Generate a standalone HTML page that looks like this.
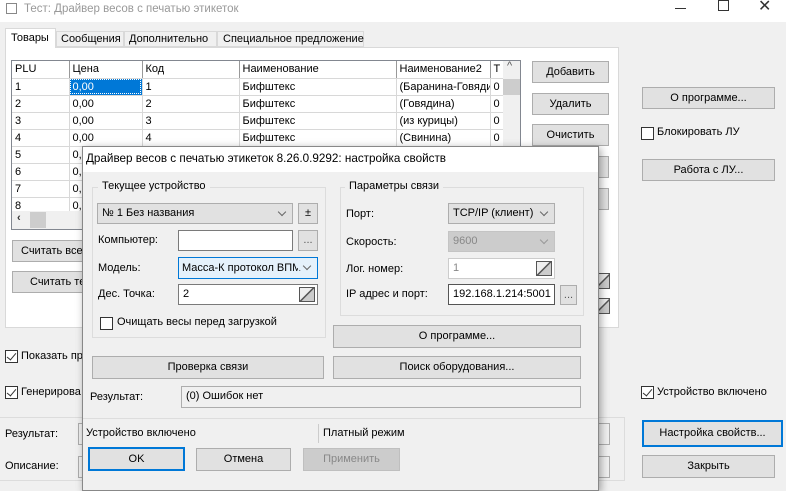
<!DOCTYPE html>
<html><head><meta charset="utf-8">
<style>
*{box-sizing:border-box;margin:0;padding:0}
body{width:786px;height:485px;overflow:hidden;background:#f0f0f0;font-family:"Liberation Sans","DejaVu Sans",sans-serif;font-size:11px;color:#000;position:relative}
.a{position:absolute;white-space:nowrap}
.btn{position:absolute;background:#e1e1e1;border:1px solid #adadad;text-align:center;line-height:20px;white-space:nowrap;overflow:hidden}
.ed{position:absolute;background:#fff;border:1px solid #7a7a7a;padding-left:4px;line-height:18px;white-space:nowrap;overflow:hidden}
.cb{position:absolute;width:13px;height:13px;border:1px solid #333;background:#fff}
.chk::after{content:"";position:absolute;left:3px;top:0px;width:4px;height:8px;border-right:1.5px solid #333;border-bottom:1.5px solid #333;transform:rotate(40deg)}
.dd{position:absolute;right:7px;top:5px;width:6px;height:6px;border-right:1px solid #666;border-bottom:1px solid #666;transform:rotate(45deg)}
.spin{position:absolute;right:2px;top:2px;width:16px;height:15px;border:1px solid #555;background:linear-gradient(135deg,#eee 45%,#555 47%,#555 53%,#ccc 55%)}
table{border-collapse:collapse}
td{border-right:1px solid #d8d8d8;border-bottom:1px solid #d8d8d8;height:17px;padding-left:3px;white-space:nowrap;overflow:hidden}
.grp{position:absolute;border:1px solid #dcdcdc}
.gl{position:absolute;background:#f0f0f0;padding:0 4px;top:-8px;left:8px}
</style></head><body>
<div class="a" style="left:0;top:0;width:786px;height:22px;background:#fff"></div>
<div class="a" style="left:6px;top:3px;width:11px;height:11px;border:1px solid #888"></div>
<div class="a" style="left:24px;top:3px;color:#999;font-size:11.5px">Тест: Драйвер весов с печатью этикеток</div>
<div class="a" style="left:675px;top:8px;width:11px;height:1px;background:#333"></div>
<div class="a" style="left:718px;top:0px;width:11px;height:11px;border:1px solid #333"></div>
<div class="a" style="left:758px;top:-4px;font-size:16px;color:#333">✕</div>
<div class="a" style="left:5px;top:47px;width:614px;height:281px;background:#fff;border:1px solid #d9d9d9"></div>
<div class="a" style="left:5px;top:28px;width:51px;height:20px;background:#fff;border:1px solid #d9d9d9;border-bottom:none;padding:3px 0 0 5px">Товары</div>
<div class="a" style="left:56px;top:31px;width:68px;height:16px;border:1px solid #d9d9d9;padding:1px 0 0 4px">Сообщения</div>
<div class="a" style="left:124px;top:31px;width:93px;height:16px;border:1px solid #d9d9d9;padding:1px 0 0 4px">Дополнительно</div>
<div class="a" style="left:217px;top:31px;width:147px;height:16px;border:1px solid #d9d9d9;padding:1px 0 0 5px">Специальное предложение</div>
<div class="a" style="left:11px;top:60px;width:510px;height:170px;border:1px solid #828790;overflow:hidden;background:#fff">
<table style="table-layout:fixed;width:492px">
<colgroup><col style="width:57px"><col style="width:73px"><col style="width:97px"><col style="width:157px"><col style="width:94px"><col style="width:14px"></colgroup>
<tr><td style="border-right:1px solid #999">PLU</td><td style="border-right:1px solid #999">Цена</td><td style="border-right:1px solid #999">Код</td><td style="border-right:1px solid #999">Наименование</td><td style="border-right:1px solid #999">Наименование2</td><td>Т</td></tr>
<tr><td>1</td><td style="background:#0078d7;color:#fff;outline:1px dotted #fff;outline-offset:-2px">0,00</td><td>1</td><td>Бифштекс</td><td>(Баранина-Говяди</td><td>0</td></tr>
<tr><td>2</td><td>0,00</td><td>2</td><td>Бифштекс</td><td>(Говядина)</td><td>0</td></tr>
<tr><td>3</td><td>0,00</td><td>3</td><td>Бифштекс</td><td>(из курицы)</td><td>0</td></tr>
<tr><td>4</td><td>0,00</td><td>4</td><td>Бифштекс</td><td>(Свинина)</td><td>0</td></tr>
<tr><td>5</td><td>0,00</td><td></td><td></td><td></td><td></td></tr>
<tr><td>6</td><td>0,00</td><td></td><td></td><td></td><td></td></tr>
<tr><td>7</td><td>0,00</td><td></td><td></td><td></td><td></td></tr>
<tr><td>8</td><td>0,00</td><td></td><td></td><td></td><td></td></tr>
</table>
<div class="a" style="left:491px;top:0;width:17px;height:168px;background:#f0f0f0"></div>
<div class="a" style="left:491px;top:18px;width:17px;height:16px;background:#cdcdcd"></div>
<div class="a" style="left:495px;top:-1px;color:#555">^</div>
<div class="a" style="left:0;top:150px;width:491px;height:18px;background:#f0f0f0"></div>
<div class="a" style="left:18px;top:151px;width:16px;height:16px;background:#cdcdcd"></div>
<div class="a" style="left:5px;top:151px;color:#333;font-weight:bold">‹</div>
</div>
<div class="btn" style="left:532px;top:61px;width:77px;height:22px">Добавить</div>
<div class="btn" style="left:532px;top:93px;width:77px;height:22px">Удалить</div>
<div class="btn" style="left:532px;top:124px;width:77px;height:22px">Очистить</div>
<div class="btn" style="left:532px;top:156px;width:77px;height:22px"></div>
<div class="btn" style="left:532px;top:188px;width:77px;height:22px"></div>
<div class="a" style="left:596px;top:273px;width:14px;height:16px;border:1px solid #555;background:linear-gradient(135deg,#eee 45%,#555 47%,#555 53%,#ccc 55%)"></div>
<div class="a" style="left:596px;top:298px;width:14px;height:16px;border:1px solid #555;background:linear-gradient(135deg,#eee 45%,#555 47%,#555 53%,#ccc 55%)"></div>
<div class="btn" style="left:12px;top:240px;width:90px;height:22px;text-align:left;padding-left:8px">Считать все</div>
<div class="btn" style="left:12px;top:271px;width:90px;height:22px;text-align:left;padding-left:17px">Считать те</div>
<div class="btn" style="left:642px;top:87px;width:133px;height:22px">О программе...</div>
<div class="cb" style="left:641px;top:127px"></div><div class="a" style="left:657px;top:126px">Блокировать ЛУ</div>
<div class="btn" style="left:642px;top:159px;width:133px;height:22px">Работа с ЛУ...</div>
<div class="cb chk" style="left:641px;top:386px"></div><div class="a" style="left:657px;top:386px">Устройство включено</div>
<div class="btn" style="left:642px;top:420px;width:141px;height:27px;border:2px solid #0078d7;line-height:23px">Настройка свойств...</div>
<div class="btn" style="left:642px;top:455px;width:133px;height:23px">Закрыть</div>
<div class="cb chk" style="left:5px;top:350px"></div><div class="a" style="left:21px;top:350px">Показать пр</div>
<div class="cb chk" style="left:5px;top:386px"></div><div class="a" style="left:21px;top:386px">Генерирова</div>
<div class="a" style="left:0;top:417px;width:625px;height:64px;border:1px solid #dcdcdc;border-left:none"></div>
<div class="a" style="left:5px;top:428px">Результат:</div>
<div class="a" style="left:5px;top:460px">Описание:</div>
<div class="a" style="left:78px;top:423px;width:532px;height:22px;border:1px solid #adadad"></div>
<div class="a" style="left:78px;top:456px;width:532px;height:22px;border:1px solid #adadad"></div>
<div class="a" style="left:82px;top:146px;width:517px;height:345px;background:#f0f0f0;border:1px solid #888;box-shadow:2px 2px 8px rgba(0,0,0,.35)"></div>
<div class="a" style="left:83px;top:147px;width:515px;height:25px;background:#fff"></div>
<div class="a" style="left:86px;top:152px;font-size:11.7px">Драйвер весов с печатью этикеток 8.26.0.9292: настройка свойств</div>
<div class="grp" style="left:92px;top:187px;width:234px;height:151px"><div class="gl" style="left:5px">Текущее устройство</div></div>
<div class="grp" style="left:340px;top:187px;width:244px;height:129px"><div class="gl" style="left:4px">Параметры связи</div></div>
<div class="btn" style="left:97px;top:203px;width:196px;height:21px;text-align:left;padding-left:4px;line-height:19px">№ 1 Без названия<span class="dd" style="top:5px"></span></div>
<div class="btn" style="left:298px;top:203px;width:20px;height:21px;line-height:19px">±</div>
<div class="a" style="left:98px;top:234px">Компьютер:</div>
<div class="ed" style="left:178px;top:230px;width:115px;height:21px"></div>
<div class="btn" style="left:298px;top:230px;width:20px;height:21px;line-height:19px;color:#555">...</div>
<div class="a" style="left:98px;top:262px">Модель:</div>
<div class="ed" style="left:178px;top:257px;width:140px;height:22px;background:#e5f1fb;border-color:#0078d7;line-height:20px;padding-left:3px">Масса-К протокол ВПМ<span class="dd" style="background:#e5f1fb;box-shadow:0 0 0 5px #e5f1fb"></span></div>
<div class="a" style="left:98px;top:288px">Дес. Точка:</div>
<div class="ed" style="left:178px;top:284px;width:140px;height:21px">2<span class="spin"></span></div>
<div class="cb" style="left:100px;top:317px"></div><div class="a" style="left:117px;top:316px">Очищать весы перед загрузкой</div>
<div class="a" style="left:346px;top:208px">Порт:</div>
<div class="btn" style="left:448px;top:203px;width:107px;height:21px;text-align:left;padding-left:4px;line-height:19px">TCP/IP (клиент)<span class="dd" style="background:#e1e1e1;box-shadow:0 0 0 4px #e1e1e1"></span></div>
<div class="a" style="left:346px;top:236px">Скорость:</div>
<div class="btn" style="left:448px;top:231px;width:107px;height:21px;text-align:left;padding-left:4px;line-height:19px;background:#ccc;border-color:#c4c4c4;color:#888">9600<span class="dd" style="border-color:#999"></span></div>
<div class="a" style="left:346px;top:263px">Лог. номер:</div>
<div class="ed" style="left:448px;top:258px;width:107px;height:21px;border-color:#ccc;color:#888">1<span class="spin"></span></div>
<div class="a" style="left:346px;top:288px">IP адрес и порт:</div>
<div class="ed" style="left:448px;top:284px;width:107px;height:21px;border-color:#555">192.168.1.214:5001</div>
<div class="btn" style="left:560px;top:285px;width:17px;height:20px;line-height:18px;color:#555">...</div>
<div class="btn" style="left:333px;top:325px;width:248px;height:23px">О программе...</div>
<div class="btn" style="left:92px;top:356px;width:232px;height:23px">Проверка связи</div>
<div class="btn" style="left:333px;top:356px;width:248px;height:23px">Поиск оборудования...</div>
<div class="a" style="left:90px;top:391px">Результат:</div>
<div class="ed" style="left:181px;top:386px;width:400px;height:22px;background:#f0f0f0;border-color:#adadad;line-height:19px">(0) Ошибок нет</div>
<div class="a" style="left:83px;top:418px;width:515px;height:1px;background:#ddd"></div>
<div class="a" style="left:86px;top:427px">Устройство включено</div>
<div class="a" style="left:318px;top:424px;width:1px;height:19px;background:#ccc"></div>
<div class="a" style="left:323px;top:427px">Платный режим</div>
<div class="btn" style="left:88px;top:447px;width:97px;height:24px;border:2px solid #0078d7;line-height:20px">OK</div>
<div class="btn" style="left:196px;top:448px;width:95px;height:23px">Отмена</div>
<div class="btn" style="left:303px;top:448px;width:97px;height:23px;background:#ccc;border-color:#bfbfbf;color:#888">Применить</div>
</body></html>
